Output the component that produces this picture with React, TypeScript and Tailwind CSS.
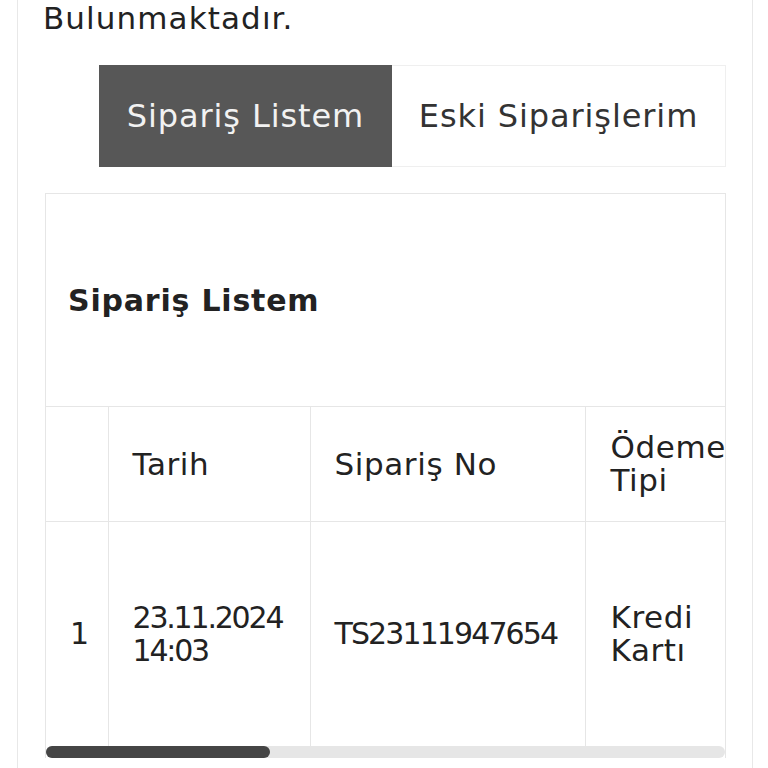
import React from "react";

const font = { fontFamily: '"DejaVu Sans", sans-serif' };

export default function App() {
  return (
    <div className="w-[768px] h-[768px] overflow-hidden bg-white text-[#222]" style={font}>
      <div className="ml-[17px] w-[736px] h-[768px] border-x border-[#e8e8e8] pl-[27px] pr-[26px]">
        <p className="-ml-[2px] text-[31px] leading-[36px] tracking-[1.1px]">Bulunmaktadır.</p>

        <div className="mt-[29px] flex justify-end">
          <button
            type="button"
            className="h-[102px] w-[293px] bg-[#575757] text-[32px] tracking-[0.9px] text-[#f2f2f2]"
          >
            Sipariş Listem
          </button>
          <button
            type="button"
            className="h-[102px] w-[334px] border border-l-0 border-[#efefef] bg-white text-[32px] tracking-[0.9px] text-[#333]"
          >
            Eski Siparişlerim
          </button>
        </div>

        <div className="mt-[26px] border border-b-0 border-[#e6e6e6]">
          <div className="flex h-[212px] items-center pl-[22px]">
            <h2 className="text-[30px] font-bold tracking-[0.8px] text-[#222]">Sipariş Listem</h2>
          </div>
          <div className="overflow-hidden">
            <table className="w-[739px] table-fixed border-collapse text-[31px] leading-[33px] tracking-[0.6px]">
              <colgroup>
                <col className="w-[62px]" />
                <col className="w-[202px]" />
                <col className="w-[275px]" />
                <col className="w-[200px]" />
              </colgroup>
              <thead>
                <tr className="h-[115px] border-t border-[#e6e6e6] text-left">
                  <th className="font-normal"></th>
                  <th className="border-l border-[#e6e6e6] pl-[24px] font-normal">Tarih</th>
                  <th className="border-l border-[#e6e6e6] pl-[24px] font-normal">Sipariş No</th>
                  <th className="border-l border-[#e6e6e6] pl-[25px] pr-[30px] font-normal">Ödeme Tipi</th>
                </tr>
              </thead>
              <tbody>
                <tr className="h-[224px] border-t border-[#e6e6e6]">
                  <td className="pl-[24px] text-[30px]">1</td>
                  <td className="border-l border-[#e6e6e6] pl-[24px] text-[30px] tracking-[-2.2px]">
                    23.11.2024
                    <br />
                    14:03
                  </td>
                  <td className="border-l border-[#e6e6e6] pl-[24px] text-[30px] tracking-[-1.9px]">
                    TS23111947654
                  </td>
                  <td className="border-l border-[#e6e6e6] pl-[25px] pr-[30px]">Kredi Kartı</td>
                </tr>
              </tbody>
            </table>
          </div>
          <div className="h-[12px] rounded-full bg-[#e6e6e6]">
            <div className="h-[12px] w-[224px] rounded-full bg-[#454545]"></div>
          </div>
        </div>
      </div>
    </div>
  );
}
